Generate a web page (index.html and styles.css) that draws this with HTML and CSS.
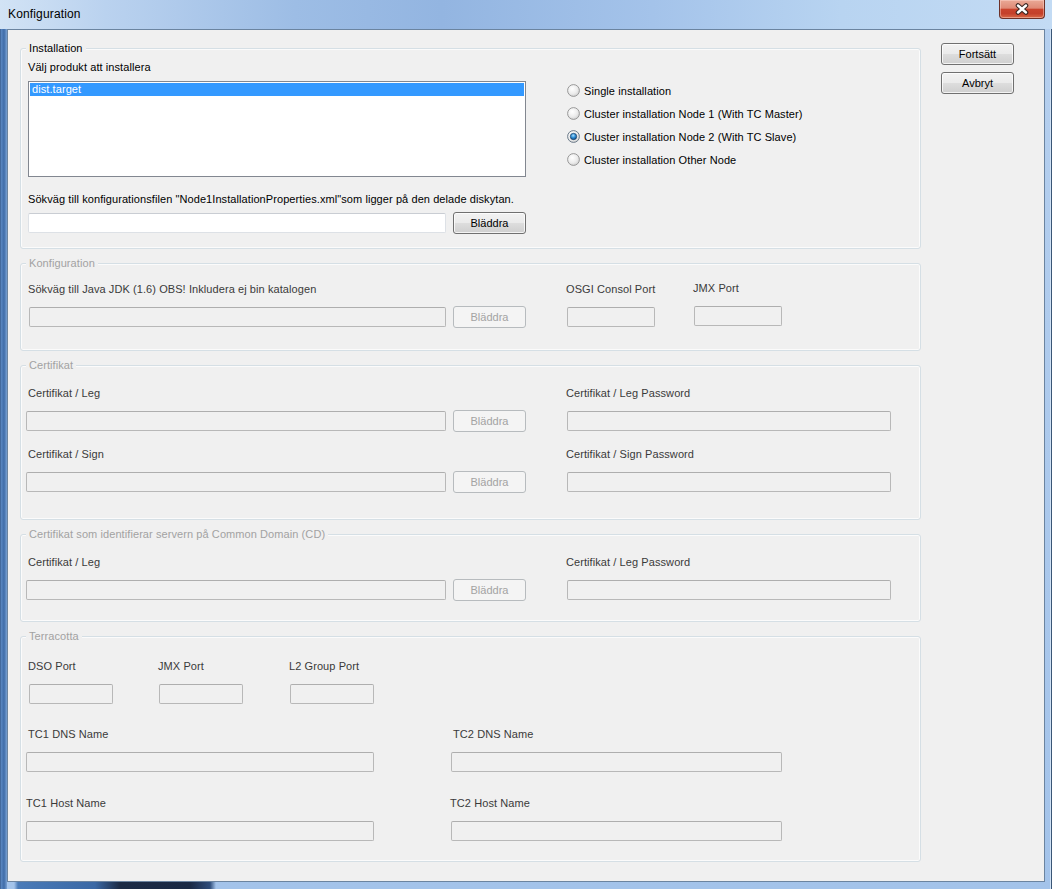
FILE: index.html
```html
<!DOCTYPE html>
<html lang="sv">
<head>
<meta charset="utf-8">
<title>Konfiguration</title>
<link rel="stylesheet" href="styles.css">
</head>
<body>
<div class="window">
  <div class="titlebar">
    <span class="title">Konfiguration</span>
    <div class="close-btn">
      <svg width="16" height="12" viewBox="0 0 16 12">
        <path d="M4 2.5 L12 9.5 M12 2.5 L4 9.5" stroke="#3a2622" stroke-width="4.6" stroke-linecap="round" fill="none"/>
        <path d="M4 2.5 L12 9.5 M12 2.5 L4 9.5" stroke="#ffffff" stroke-width="2.4" stroke-linecap="round" fill="none"/>
      </svg>
    </div>
  </div>
  <div class="client">
    <div class="groups">
      <section class="group g-install enabled">
        <div class="group-title">Installation</div>
        <div class="install-body">
          <div class="install-left">
            <div class="lbl first-lbl">Välj produkt att installera</div>
            <div class="listbox"><div class="list-item selected">dist.target</div></div>
            <div class="lbl path-lbl">Sökväg till konfigurationsfilen "Node1InstallationProperties.xml"som ligger på den delade diskytan.</div>
            <div class="ctl-row path-row">
              <input class="tb w418" type="text">
              <button class="btn btn-browse" type="button">Bläddra</button>
            </div>
          </div>
          <div class="install-right">
            <div class="radio">
              <svg class="radio-ico" width="13" height="13" viewBox="0 0 13 13"><circle cx="6.5" cy="6.5" r="5.9" fill="url(#rg)" stroke="#8f8f8f" stroke-width="0.9"/></svg>
              <span>Single installation</span>
            </div>
            <div class="radio">
              <svg class="radio-ico" width="13" height="13" viewBox="0 0 13 13"><circle cx="6.5" cy="6.5" r="5.9" fill="url(#rg)" stroke="#8f8f8f" stroke-width="0.9"/></svg>
              <span>Cluster installation Node 1 (With TC Master)</span>
            </div>
            <div class="radio">
              <svg class="radio-ico" width="13" height="13" viewBox="0 0 13 13">
                <defs>
                  <radialGradient id="rg" cx="0.4" cy="0.35" r="0.7">
                    <stop offset="0" stop-color="#ffffff"/>
                    <stop offset="0.6" stop-color="#ececec"/>
                    <stop offset="1" stop-color="#cfcfcf"/>
                  </radialGradient>
                  <radialGradient id="rd" cx="0.45" cy="0.35" r="0.65">
                    <stop offset="0" stop-color="#a7dcfb"/>
                    <stop offset="0.5" stop-color="#2f8fd6"/>
                    <stop offset="1" stop-color="#0b4a86"/>
                  </radialGradient>
                </defs>
                <circle cx="6.5" cy="6.5" r="5.9" fill="url(#rg)" stroke="#5f6f80" stroke-width="0.9"/>
                <circle cx="6.5" cy="6.5" r="3.2" fill="url(#rd)" stroke="#1c3f66" stroke-width="0.7"/>
              </svg>
              <span>Cluster installation Node 2 (With TC Slave)</span>
            </div>
            <div class="radio">
              <svg class="radio-ico" width="13" height="13" viewBox="0 0 13 13"><circle cx="6.5" cy="6.5" r="5.9" fill="url(#rg)" stroke="#8f8f8f" stroke-width="0.9"/></svg>
              <span>Cluster installation Other Node</span>
            </div>
          </div>
        </div>
      </section>

      <section class="group g-konf disabled">
        <div class="group-title">Konfiguration</div>
        <div class="field-row r-konf">
          <div class="field ml8">
            <div class="lbl lbl-m1">Sökväg till Java JDK (1.6) OBS! Inkludera ej bin katalogen</div>
            <div class="ctl-row">
              <input class="tb w417" type="text" disabled>
              <button class="btn btn-browse" type="button" disabled>Bläddra</button>
            </div>
          </div>
          <div class="field ml41">
            <div class="lbl lbl-m1">OSGI Consol Port</div>
            <div class="ctl-row"><input class="tb w88" type="text" disabled></div>
          </div>
          <div class="field ml39 up1">
            <div class="lbl lbl-m1">JMX Port</div>
            <div class="ctl-row"><input class="tb w88" type="text" disabled></div>
          </div>
        </div>
      </section>

      <section class="group g-cert disabled">
        <div class="group-title">Certifikat</div>
        <div class="field-row r-cert1">
          <div class="field ml5">
            <div class="lbl lbl-p2">Certifikat / Leg</div>
            <div class="ctl-row">
              <input class="tb w420" type="text" disabled>
              <button class="btn btn-browse" type="button" disabled>Bläddra</button>
            </div>
          </div>
          <div class="field ml41">
            <div class="lbl lbl-m1">Certifikat / Leg Password</div>
            <div class="ctl-row"><input class="tb w324" type="text" disabled></div>
          </div>
        </div>
        <div class="field-row r-cert2">
          <div class="field ml5">
            <div class="lbl lbl-p2">Certifikat / Sign</div>
            <div class="ctl-row">
              <input class="tb w420" type="text" disabled>
              <button class="btn btn-browse" type="button" disabled>Bläddra</button>
            </div>
          </div>
          <div class="field ml41">
            <div class="lbl lbl-m1">Certifikat / Sign Password</div>
            <div class="ctl-row"><input class="tb w324" type="text" disabled></div>
          </div>
        </div>
      </section>

      <section class="group g-cd disabled">
        <div class="group-title">Certifikat som identifierar servern på Common Domain (CD)</div>
        <div class="field-row r-cd">
          <div class="field ml5">
            <div class="lbl lbl-p2">Certifikat / Leg</div>
            <div class="ctl-row">
              <input class="tb w420" type="text" disabled>
              <button class="btn btn-browse" type="button" disabled>Bläddra</button>
            </div>
          </div>
          <div class="field ml41">
            <div class="lbl lbl-m1">Certifikat / Leg Password</div>
            <div class="ctl-row"><input class="tb w324" type="text" disabled></div>
          </div>
        </div>
      </section>

      <section class="group g-tc disabled">
        <div class="group-title">Terracotta</div>
        <div class="field-row r-tc1">
          <div class="field ml8">
            <div class="lbl lbl-m1">DSO Port</div>
            <div class="ctl-row"><input class="tb w84" type="text" disabled></div>
          </div>
          <div class="field ml46">
            <div class="lbl lbl-m1">JMX Port</div>
            <div class="ctl-row"><input class="tb w84" type="text" disabled></div>
          </div>
          <div class="field ml47">
            <div class="lbl lbl-m1">L2 Group Port</div>
            <div class="ctl-row"><input class="tb w84" type="text" disabled></div>
          </div>
        </div>
        <div class="field-row r-tc2">
          <div class="field ml5">
            <div class="lbl lbl-p2">TC1 DNS Name</div>
            <div class="ctl-row"><input class="tb w348" type="text" disabled></div>
          </div>
          <div class="field ml77">
            <div class="lbl lbl-p2">TC2 DNS Name</div>
            <div class="ctl-row"><input class="tb w331" type="text" disabled></div>
          </div>
        </div>
        <div class="field-row r-tc3">
          <div class="field ml5">
            <div class="lbl">TC1 Host Name</div>
            <div class="ctl-row"><input class="tb w348" type="text" disabled></div>
          </div>
          <div class="field ml77">
            <div class="lbl lbl-m1">TC2 Host Name</div>
            <div class="ctl-row"><input class="tb w331" type="text" disabled></div>
          </div>
        </div>
      </section>
    </div>

    <div class="actions">
      <button class="btn" type="button">Fortsätt</button>
      <button class="btn" type="button">Avbryt</button>
    </div>
  </div>
</div>
</body>
</html>
```

FILE: styles.css
```css
* { box-sizing: border-box; }

html, body {
  margin: 0;
  padding: 0;
}

body {
  width: 1052px;
  height: 889px;
  overflow: hidden;
  font-family: "Liberation Sans", Arial, sans-serif;
  font-size: 11px;
  letter-spacing: 0.08px;
  color: #000;
  background: #fff;
}

/* ---------- window frame ---------- */
.window {
  width: 1052px;
  height: 889px;
  display: flex;
  flex-direction: column;
  background:
    linear-gradient(to right, #2c4c78 0, #5b88c2 1px, #3f6ca8 4px, #7aa2d4 7px, transparent 7px) left top / 8px 100% no-repeat,
    linear-gradient(to left, #3a5676 0, #3a5676 1px, #cfe1f5 1px, #cfe1f5 2px, transparent 2px) right top / 3px 100% no-repeat,
    linear-gradient(to right, transparent 14px, #4a7bb8 18px, #3a68a5 95px, #1c2b45 120px, #1a2944 190px, #2f4d7a 210px, transparent 216px) left bottom / 100% 7px no-repeat,
    linear-gradient(#b6d0ef, #a3c3ea);
}

.titlebar {
  height: 29px;
  display: flex;
  align-items: flex-start;
  background: linear-gradient(to right, #d2e3f5 0%, #bad2ef 10%, #9dbde5 28%, #93b5e1 42%, #a4c3ea 62%, #b8d4f1 80%, #c3dbf4 100%);
}

.title {
  margin-left: 8px;
  line-height: 29px;
  font-size: 12px;
  letter-spacing: 0.15px;
  color: #000;
}

.close-btn {
  margin-left: auto;
  margin-right: 7px;
  width: 46px;
  height: 19px;
  border: 1px solid #6d3128;
  border-top: none;
  border-radius: 0 0 4px 4px;
  background: linear-gradient(#eaa996 0%, #df8a76 45%, #c9432c 52%, #c4402a 75%, #d96846 100%);
  box-shadow: inset 0 0 0 1px rgba(255, 220, 210, 0.45);
  display: flex;
  align-items: center;
  justify-content: center;
}

.close-btn svg { display: block; }

/* ---------- client area ---------- */
.client {
  flex: 1;
  margin: 0 7px 7px 7px;
  border: 1px solid #6b84a0;
  background: #f0f0f0;
  display: flex;
  align-items: flex-start;
  padding: 13px 0 0 12px;
}

.groups {
  width: 901px;
  flex-shrink: 0;
  padding-top: 5px;
}

.actions {
  margin-left: 20px;
  display: flex;
  flex-direction: column;
  gap: 7px;
}

/* ---------- group boxes ---------- */
.group {
  border: 1px solid #d5dfe5;
  border-radius: 3px;
  box-shadow: inset 0 0 0 1px rgba(255, 255, 255, 0.7);
}

.group + .group { margin-top: 14px; }

.g-install { height: 201px; }
.g-konf    { height: 88px; }
.g-cert    { height: 155px; }
.g-cd      { height: 88px; }
.g-tc      { height: 226px; }

.group-title {
  width: max-content;
  height: 13px;
  line-height: 13px;
  margin: -7px 0 0 5px;
  padding: 0 3px;
  background: #f0f0f0;
  white-space: nowrap;
}

.enabled .group-title { color: #000; }
.disabled .group-title { color: #a2a2a2; }
.disabled .lbl { color: #3a3a3a; }

/* ---------- labels & controls ---------- */
.lbl {
  height: 13px;
  line-height: 13px;
  white-space: nowrap;
}

.field .lbl { width: 0; overflow: visible; }
.lbl-m1 { margin-left: -1px; }
.lbl-p2 { margin-left: 2px; }

.ctl-row {
  display: flex;
  height: 20px;
}

.tb {
  display: block;
  height: 20px;
  margin: 0;
  padding: 0 2px;
  border: 1px solid #dde1e6;
  border-top-color: #c9cdd3;
  border-radius: 2px;
  background: #fff;
  font: inherit;
  outline: none;
}

.tb:disabled {
  background: #f0f0f0;
  border-color: #b8b8b8;
  border-top-color: #aeaeae;
}

.w84  { width: 84px; }
.w88  { width: 88px; }
.w324 { width: 324px; }
.w331 { width: 331px; }
.w348 { width: 348px; }
.w417 { width: 417px; }
.w418 { width: 418px; }
.w420 { width: 420px; }

.btn {
  width: 73px;
  height: 22px;
  margin: 0;
  padding: 0;
  border: 1px solid #707070;
  border-radius: 3px;
  background: linear-gradient(#f2f2f2 0%, #ebebeb 48%, #dddddd 52%, #cfcfcf 100%);
  box-shadow: inset 0 0 0 1px rgba(255, 255, 255, 0.75);
  font: inherit;
  color: #000;
  line-height: 20px;
  text-align: center;
}

.btn:disabled {
  border-color: #b7bbbe;
  background: #f4f4f4;
  box-shadow: none;
  color: #a3a3a3;
}

.ctl-row .btn-browse {
  margin: -1px 0 -1px 7px;
}

/* ---------- installation group ---------- */
.install-body {
  display: flex;
  padding-left: 7px;
}

.install-left { width: 498px; }

.first-lbl { margin-top: 6px; }

.listbox {
  margin-top: 7px;
  height: 96px;
  border: 1px solid #828790;
  background: #fff;
  padding: 1px;
}

.list-item {
  height: 13px;
  line-height: 13px;
  padding-left: 2px;
}

.list-item.selected {
  background: #3399ff;
  color: #fff;
}

.path-lbl { margin-top: 16px; }
.path-row { margin-top: 7px; }

.install-right {
  margin-left: 41px;
  padding-top: 24px;
}

.radio {
  display: flex;
  align-items: center;
  height: 23px;
  white-space: nowrap;
}

.radio-ico {
  display: block;
  margin-right: 4px;
  flex-shrink: 0;
}

/* ---------- field rows ---------- */
.field-row {
  display: flex;
  align-items: flex-start;
}

.field {
  display: flex;
  flex-direction: column;
}

.field .ctl-row { margin-top: 11px; }

.up1 { margin-top: -1px; }

.ml5  { margin-left: 5px; }
.ml8  { margin-left: 8px; }
.ml39 { margin-left: 39px; }
.ml41 { margin-left: 41px; }
.ml46 { margin-left: 46px; }
.ml47 { margin-left: 47px; }
.ml77 { margin-left: 77px; }

.r-konf  { margin-top: 13px; }
.r-cert1 { margin-top: 15px; }
.r-cert2 { margin-top: 17px; }
.r-cd    { margin-top: 15px; }
.r-tc1   { margin-top: 17px; }
.r-tc2   { margin-top: 24px; }
.r-tc3   { margin-top: 25px; }
```
